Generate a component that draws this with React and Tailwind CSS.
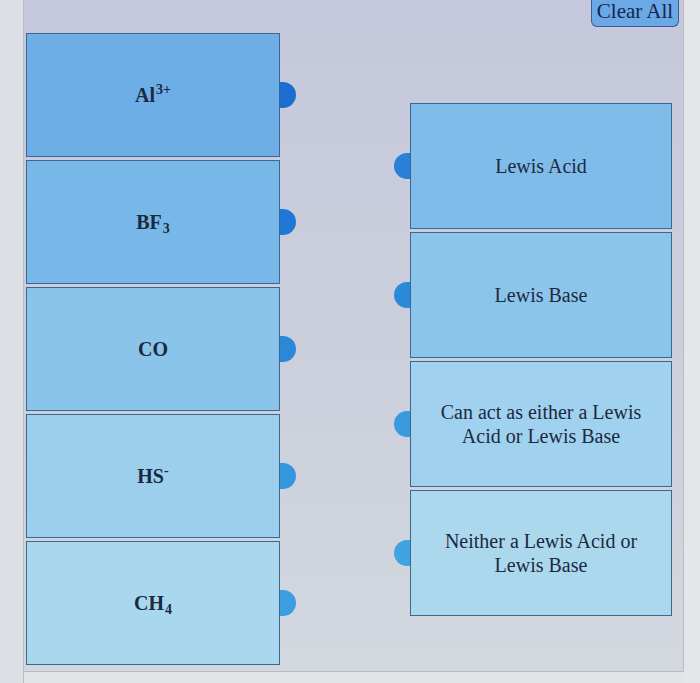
import React from 'react';

const serif = { fontFamily: '"Liberation Serif", "Times New Roman", serif' };

const sources = [
  { key: 'al', label: <>Al<sup className="text-[14px] relative -top-[8px] ml-[1px]">3+</sup></>, bg: 'bg-[#6eaee6]', tab: 'bg-[#1c6dd0]' },
  { key: 'bf', label: <>BF<sub className="text-[14px] relative top-[4px] ml-[1px]">3</sub></>, bg: 'bg-[#78b8e8]', tab: 'bg-[#1f78d6]' },
  { key: 'co', label: <>CO</>, bg: 'bg-[#8ac4ea]', tab: 'bg-[#2a88d8]' },
  { key: 'hs', label: <>HS<sup className="text-[14px] relative -top-[8px]">-</sup></>, bg: 'bg-[#9ccfec]', tab: 'bg-[#3496dc]' },
  { key: 'ch', label: <>CH<sub className="text-[14px] relative top-[4px] ml-[1px]">4</sub></>, bg: 'bg-[#a8d7ee]', tab: 'bg-[#3a9ee0]' },
];

const targets = [
  { key: 'acid', lines: ['Lewis Acid'], bg: 'bg-[#80bcea]', tab: 'bg-[#2a80d6]' },
  { key: 'base', lines: ['Lewis Base'], bg: 'bg-[#8cc5ec]', tab: 'bg-[#2a8ada]' },
  { key: 'either', lines: ['Can act as either a Lewis', 'Acid or Lewis Base'], bg: 'bg-[#a0d1ee]', tab: 'bg-[#3a9ade]' },
  { key: 'neither', lines: ['Neither a Lewis Acid or', 'Lewis Base'], bg: 'bg-[#acd8ee]', tab: 'bg-[#40a4e0]' },
];

const SourceCard = ({ item }) => (
  <div className="flex items-center">
    <div className={`w-[254px] h-[124px] ${item.bg} border border-[#3d6690] flex items-center justify-center`}>
      <span className="text-[20px] font-bold text-[#1b2a3e]">{item.label}</span>
    </div>
    <div className={`w-[16px] h-[26px] rounded-r-full ${item.tab}`} />
  </div>
);

const TargetCard = ({ item }) => (
  <div className="flex items-center">
    <div className={`w-[16px] h-[26px] rounded-l-full ${item.tab}`} />
    <div className={`w-[262px] h-[126px] ${item.bg} border border-[#3d6690] flex flex-col items-center justify-center`}>
      {item.lines.map((l) => (
        <span key={l} className="text-[20px] leading-[24px] text-[#1b2a3e]">{l}</span>
      ))}
    </div>
  </div>
);

export default function App() {
  return (
    <div className="w-[700px] h-[683px] flex bg-[#e2e4e8] overflow-hidden" style={serif}>
      {/* left margin strip */}
      <div className="w-[24px] h-full bg-[#dcdfe3] border-r border-[#b8bcc4]" />

      {/* matching panel */}
      <div className="w-[660px] h-[672px] flex flex-col bg-linear-to-b from-[#c5c8dc] via-[#cbcfdc] to-[#d3d7de] border-r border-b border-[#b8bcc8]">
        <div className="h-[33px] flex justify-end pr-[4px]">
          <button className="w-[88px] h-[27px] bg-[#6aa8e6] border border-[#3b5c8c] border-t-0 rounded-b-md text-[21px] leading-[22px] text-[#16264a] flex justify-center items-start">
            Clear All
          </button>
        </div>

        <div className="flex">
          <div className="ml-[2px] flex flex-col gap-[3px]">
            {sources.map((s) => (
              <SourceCard key={s.key} item={s} />
            ))}
          </div>

          <div className="ml-[98px] mt-[70px] flex flex-col gap-[3px]">
            {targets.map((t) => (
              <TargetCard key={t.key} item={t} />
            ))}
          </div>
        </div>
      </div>

      <div className="flex-1 h-full bg-[#e4e6ea]" />
    </div>
  );
}
